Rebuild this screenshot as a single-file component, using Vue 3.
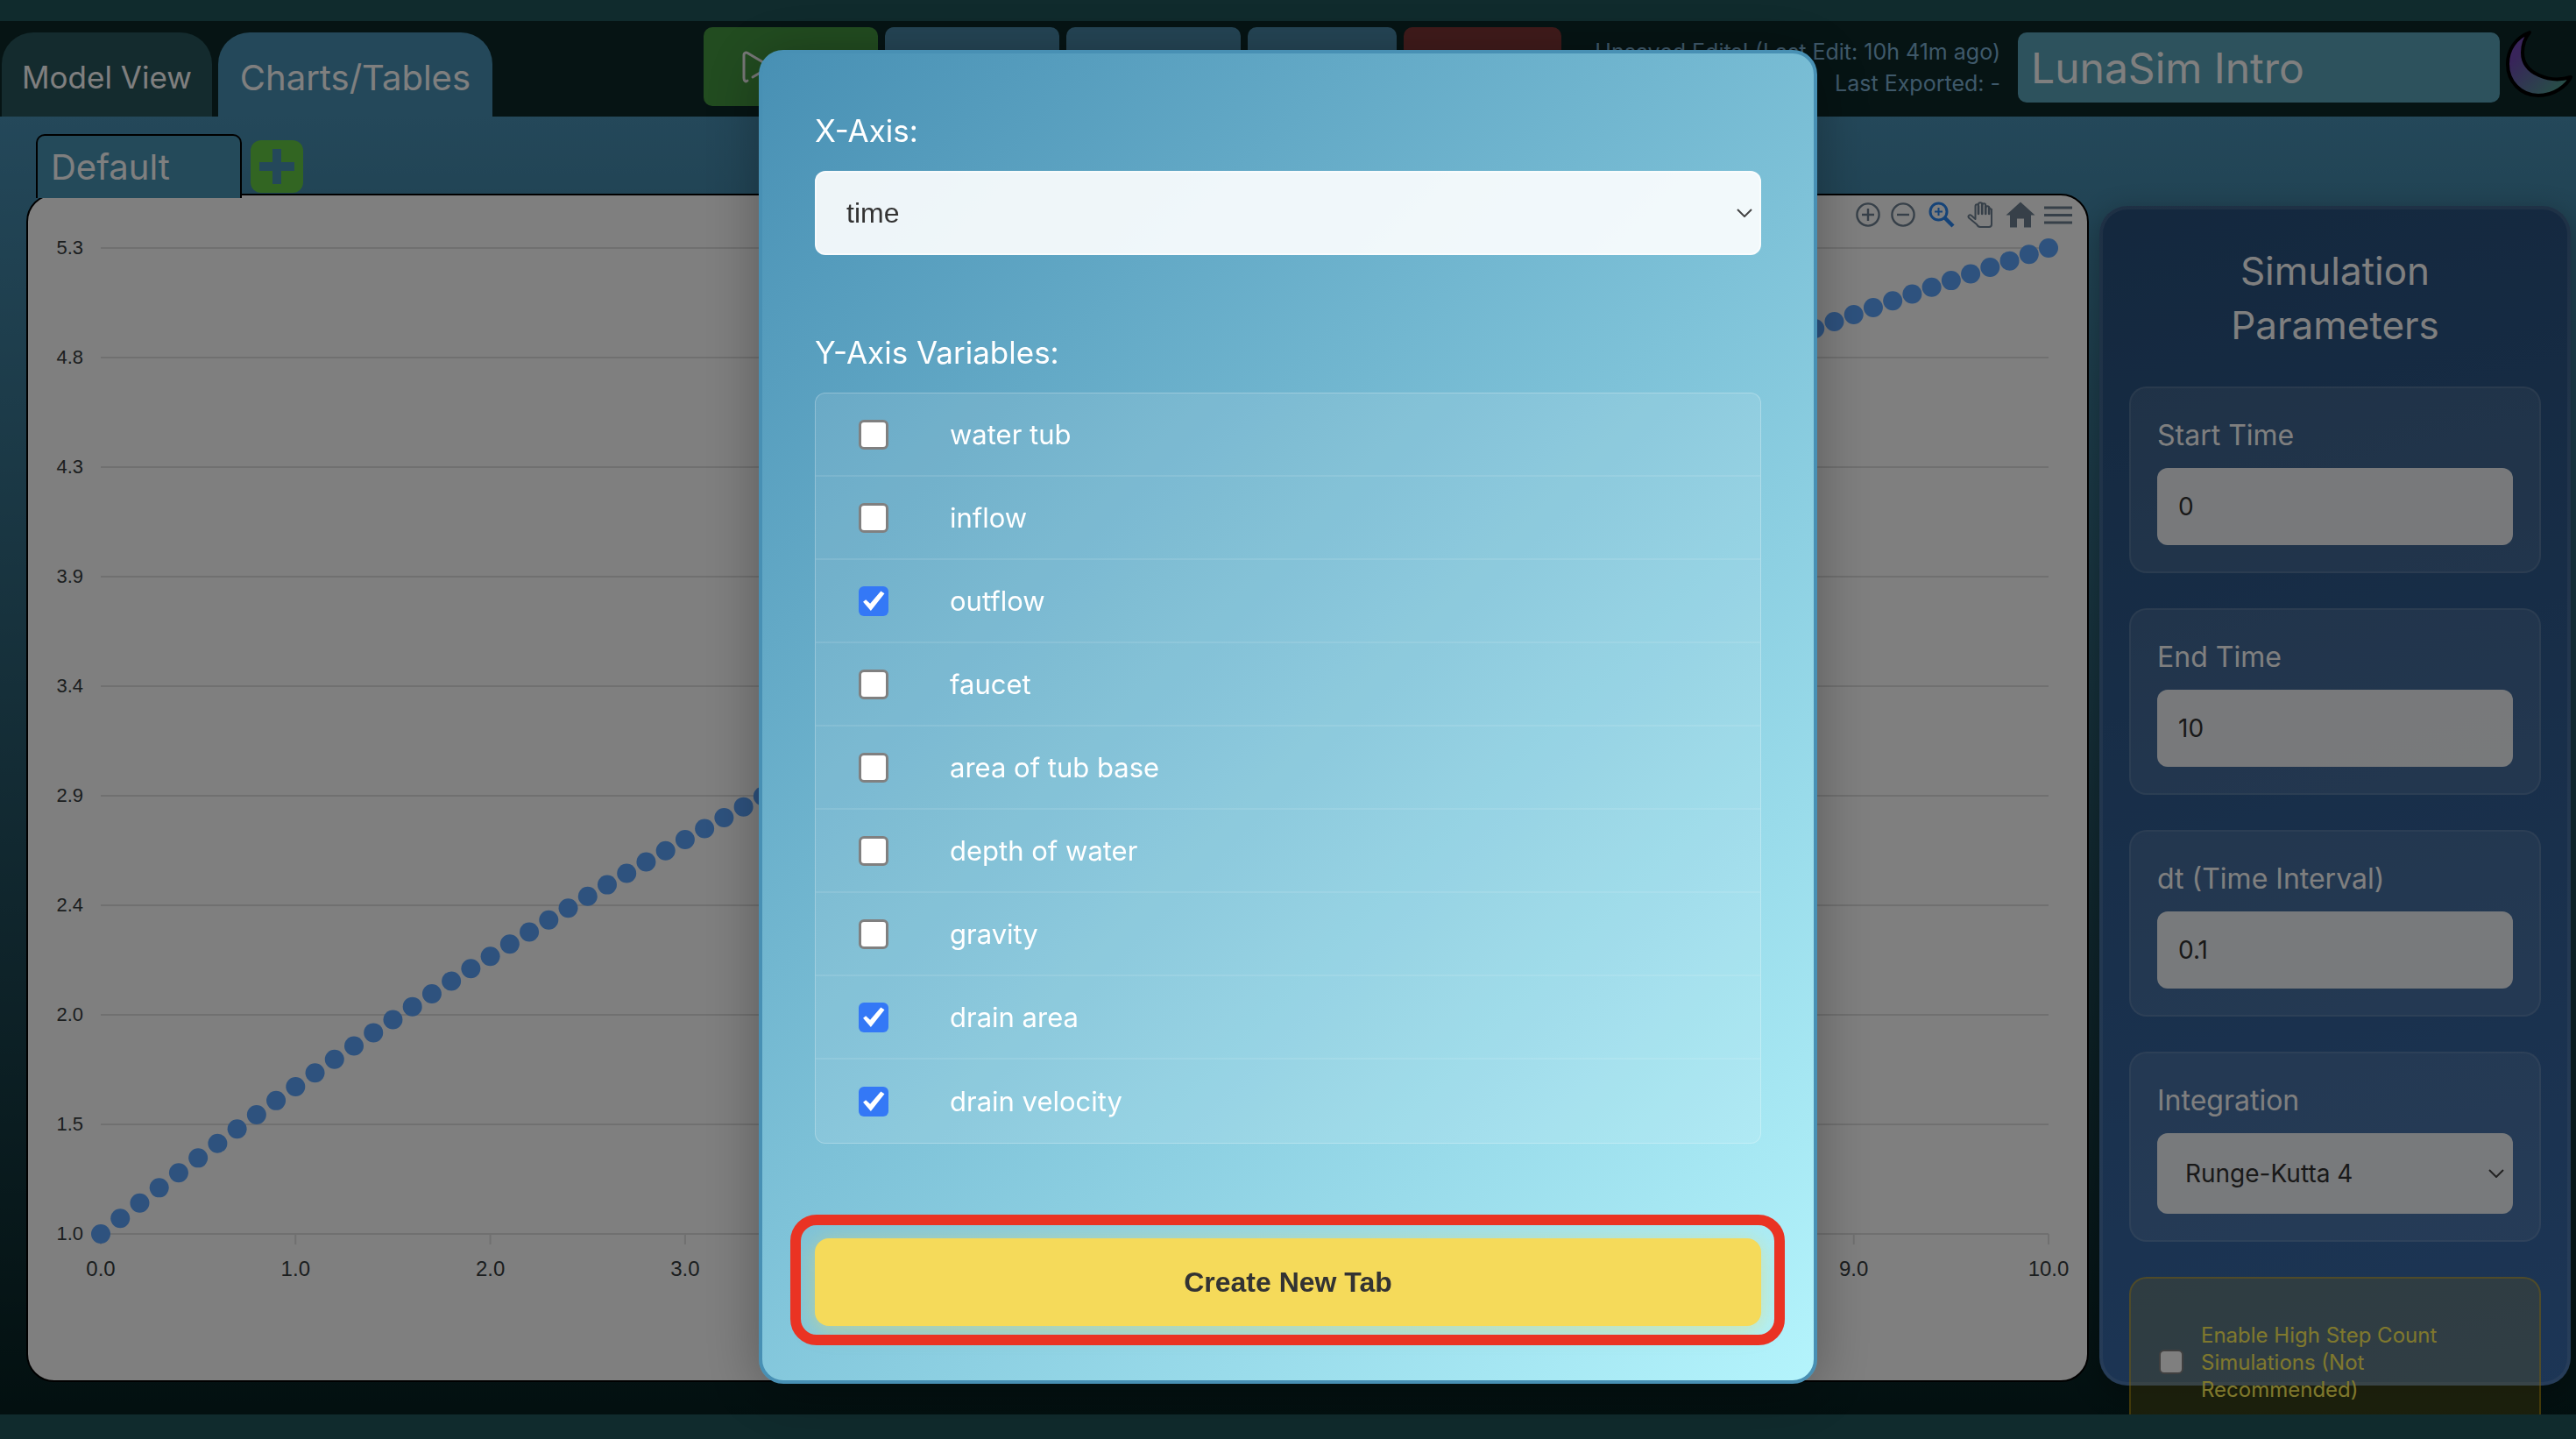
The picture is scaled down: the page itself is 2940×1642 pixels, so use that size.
<script setup>
import { ref } from 'vue'

const xAxis = ref('time')
const variables = ref([
  { name: 'water tub', checked: false },
  { name: 'inflow', checked: false },
  { name: 'outflow', checked: true },
  { name: 'faucet', checked: false },
  { name: 'area of tub base', checked: false },
  { name: 'depth of water', checked: false },
  { name: 'gravity', checked: false },
  { name: 'drain area', checked: true },
  { name: 'drain velocity', checked: true },
])

const fields = [
  { id: 'start', label: 'Start Time', value: '0' },
  { id: 'end', label: 'End Time', value: '10' },
  { id: 'dt', label: 'dt (Time Interval)', value: '0.1' },
]

const plot = { left: 83, right: 2306, top: 60, bottom: 1185 }
const yLabels = ['5.3', '4.8', '4.3', '3.9', '3.4', '2.9', '2.4', '2.0', '1.5', '1.0']
const yTicks = yLabels.map((label, i) => ({ label, y: plot.top + i * 125 }))
const xTicks = [0, 1, 2, 3, 9, 10].map((value) => ({
  label: value.toFixed(1),
  x: plot.left + (value * (plot.right - plot.left)) / 10,
}))
const points = Array.from({ length: 101 }, (_, i) => {
  const t = i / 10
  const rise = 178.92 * t - 11.632 * t ** 2 + 0.7347 * t ** 3 - 0.02357 * t ** 4
  return { x: plot.left + (t * (plot.right - plot.left)) / 10, y: plot.bottom - rise }
})
</script>

<template>
  <div class="page">
    <header class="header">
      <nav class="views">
        <button class="view">Model View</button>
        <button class="view active">Charts/Tables</button>
      </nav>
      <div class="toolbar">
        <button class="tool run" aria-label="Run">
          <svg width="44" height="40" viewBox="0 0 44 40" fill="none" stroke="#f0f0f0" stroke-width="3" stroke-linecap="round" stroke-linejoin="round">
            <path d="M7 36 C5 38 3 36 3 33 V7 C3 4 6 3 8 5 L30 18 C32 19 32 21 30 22 L13 32" />
          </svg>
        </button>
        <button class="tool" aria-label="New"></button>
        <button class="tool" aria-label="Load"></button>
        <button class="tool narrow" aria-label="Export"></button>
        <button class="tool danger" aria-label="Clear"></button>
      </div>
      <p class="status">Unsaved Edits! (Last Edit: 10h 41m ago)<br />Last Exported: -</p>
      <input class="model-name" aria-label="Model name" value="LunaSim Intro" />
      <button class="moon" aria-label="Theme">
        <svg width="78" height="84" viewBox="0 0 78 84">
          <defs>
            <linearGradient id="moon" x1="0" y1="0" x2="1" y2="1">
              <stop offset="0.25" stop-color="#7048b4" />
              <stop offset="0.85" stop-color="#509c90" />
            </linearGradient>
          </defs>
          <path d="M28 6 C12 12 3 26 3 42 C3 62 18 78 38 78 C56 78 70 67 75 57 C52 64 20 54 20 29 C20 19 23 12 28 6 Z" fill="url(#moon)" stroke="#000" stroke-width="4" stroke-linejoin="round" />
        </svg>
      </button>
    </header>

    <main class="main">
      <section class="charts">
        <div class="tab-row">
          <button class="tab">Default</button>
          <button class="add" aria-label="Add tab">
            <svg width="40" height="40" viewBox="0 0 40 40" fill="none" stroke="#4890b4" stroke-width="10">
              <path d="M20 0V40M0 20H40" />
            </svg>
          </button>
        </div>
        <div class="chart-card">
          <svg class="chart" viewBox="0 0 2350 1352">
            <g stroke="#e0e0e0" stroke-width="2">
              <line v-for="t in yTicks" :key="t.label" :x1="plot.left" :x2="plot.right" :y1="t.y" :y2="t.y" />
              <line v-for="t in xTicks" :key="t.label" :x1="t.x" :x2="t.x" :y1="plot.bottom" :y2="plot.bottom + 12" />
            </g>
            <g class="y-label">
              <text v-for="t in yTicks" :key="t.label" x="63" :y="t.y + 7">{{ t.label }}</text>
            </g>
            <g class="x-label">
              <text v-for="t in xTicks" :key="t.label" :x="t.x" y="1233">{{ t.label }}</text>
            </g>
            <g fill="#5ca4fc">
              <circle v-for="p in points" :key="p.x" :cx="p.x" :cy="p.y" r="11" />
            </g>
          </svg>
          <div class="chart-tools">
            <button aria-label="Zoom in">
              <svg width="30" height="30" viewBox="0 0 30 30" fill="none" stroke="#6e8192" stroke-width="2.4"><circle cx="15" cy="15" r="12.6" /><path d="M15 8v14M8 15h14" /></svg>
            </button>
            <button aria-label="Zoom out">
              <svg width="30" height="30" viewBox="0 0 30 30" fill="none" stroke="#6e8192" stroke-width="2.4"><circle cx="15" cy="15" r="12.6" /><path d="M8 15h14" /></svg>
            </button>
            <button class="wide" aria-label="Selection zoom">
              <svg width="30" height="30" viewBox="0 0 30 30" fill="none" stroke="#2a86f0"><circle cx="11.5" cy="11.5" r="9.5" stroke-width="3" /><path d="M11.5 7v9M7 11.5h9" stroke-width="2" /><path d="M18.5 18.5 28 28" stroke-width="4.4" /></svg>
            </button>
            <button aria-label="Panning">
              <svg width="30" height="30" viewBox="0 0 30 30" fill="none" stroke="#6e8192" stroke-width="2" stroke-linejoin="round" stroke-linecap="round"><path d="M9.500 17V5.500c0-3 3.500-3 3.500 0V3.500c0-3 4.200-3 4.200 0v1c0-3 4-3 4 0v3c0-3 4-3 4 0L28 9v17c0 2-1 3-3 3H15c-2 0-3-1-4-3L2 18.500c-1.500-2.500 1-4 3-2.500l4.500 4V15" /><path d="M13 5v9M17.200 4v10M21.200 5v9M25.200 7v7" stroke-width="2.600" /></svg>
            </button>
            <button class="wider" aria-label="Reset zoom">
              <svg width="34" height="30" viewBox="0 0 34 30" fill="#6e8192"><path d="M17 .5 33.500 15.500H29V29.500H21V19.500H13V29.500H5V15.500H.5z" /></svg>
            </button>
            <button class="menu" aria-label="Menu">
              <svg width="32" height="30" viewBox="0 0 32 30" stroke="#6e8192" stroke-width="3.200"><path d="M0 7H32M0 15.500H32M0 24H32" /></svg>
            </button>
          </div>
        </div>
      </section>

      <aside class="params">
        <h2>Simulation Parameters</h2>
        <div v-for="f in fields" :key="f.id" class="field">
          <label :for="f.id">{{ f.label }}</label>
          <input :id="f.id" type="text" :value="f.value" />
        </div>
        <div class="field">
          <label for="integration">Integration</label>
          <div class="select-wrap">
            <select id="integration"><option>Runge-Kutta 4</option></select>
            <svg class="chevron" width="18" height="10" viewBox="0 0 18 10" fill="none" stroke="#444" stroke-width="2"><path d="M1 1 9 9 17 1" /></svg>
          </div>
        </div>
        <label class="warning">
          <input type="checkbox" class="check small" />
          <span>Enable High Step Count Simulations (Not Recommended)</span>
        </label>
      </aside>
    </main>

    <div class="backdrop">
      <form class="dialog" @submit.prevent>
        <label class="caption" for="x-axis">X-Axis:</label>
        <div class="select-wrap">
          <select id="x-axis" v-model="xAxis"><option>time</option></select>
          <svg class="chevron" width="18" height="10" viewBox="0 0 18 10" fill="none" stroke="#444" stroke-width="2"><path d="M1 1 9 9 17 1" /></svg>
        </div>
        <fieldset>
          <legend class="caption">Y-Axis Variables:</legend>
          <div class="list">
            <label v-for="v in variables" :key="v.name" class="row">
              <input v-model="v.checked" type="checkbox" class="check" />
              <span>{{ v.name }}</span>
            </label>
          </div>
        </fieldset>
        <div class="submit-wrap">
          <button class="submit">Create New Tab</button>
          <div class="highlight"></div>
        </div>
      </form>
    </div>
  </div>
</template>

<style>
body {
  margin: 0;
  background: #20565a;
}
</style>

<style scoped>
* {
  box-sizing: border-box;
}
.page {
  height: 100vh;
  padding: 24px 0 28px;
  display: flex;
  flex-direction: column;
  overflow: hidden;
  background: #20565a;
  font-family: Inter, "Liberation Sans", sans-serif;
  color: #fff;
}
button,
input,
select {
  font: inherit;
  color: inherit;
  border: 0;
  margin: 0;
  padding: 0;
  background: none;
}
svg {
  display: block;
}
.header {
  flex: none;
  height: 109px;
  display: flex;
  align-items: flex-start;
  background: #0c2828;
  padding: 0 0 0 2px;
}
.views {
  display: flex;
  align-self: flex-end;
  gap: 7px;
}
.view {
  height: 96px;
  padding: 6px 23px 0;
  border-radius: 36px 36px 0 0;
  background: #28565c;
  font-size: 35px;
  white-space: nowrap;
}
.view.active {
  padding: 6px 25px 0;
  background: #4890b4;
  font-size: 40px;
}
.toolbar {
  display: flex;
  gap: 8px;
  margin: 7px 0 0 241px;
}
.tool {
  width: 199px;
  height: 90px;
  border-radius: 10px;
  background: #4a8aaa;
}
.tool.run {
  background: #449840;
  padding: 0 0 0 43px;
}
.tool.narrow {
  width: 170px;
}
.tool.danger {
  width: 180px;
  background: #803636;
}
.status {
  margin: 17px 20px 0 auto;
  text-align: right;
  font-size: 25px;
  line-height: 36px;
  color: #7fb2d4;
  white-space: nowrap;
}
.model-name {
  width: 550px;
  height: 80px;
  margin-top: 13px;
  padding: 0 15px;
  border-radius: 10px;
  background: #5aa4ba;
  font-size: 48px;
}
.moon {
  margin: 7px 3px 0 6px;
}
.main {
  flex: 1;
  min-height: 0;
  overflow: hidden;
  display: grid;
  grid-template-columns: minmax(0, 1fr) 538px;
  grid-template-rows: minmax(0, 1fr);
  gap: 12px;
  padding: 20px 6px 0 30px;
  background: linear-gradient(180deg, #4890b4, #062020);
}
.charts {
  display: flex;
  flex-direction: column;
  padding-bottom: 37px;
}
.tab-row {
  display: flex;
  align-items: center;
  gap: 10px;
  height: 73px;
  margin: 0 0 -5px 11px;
  position: relative;
  z-index: 1;
}
.tab {
  width: 235px;
  height: 73px;
  padding-left: 15px;
  text-align: left;
  border: 2px solid #000;
  border-bottom: 0;
  border-radius: 10px 10px 0 0;
  background: #4894b4;
  font-size: 40px;
}
.add {
  width: 60px;
  height: 60px;
  border-radius: 12px;
  background: #64ca44;
  display: grid;
  place-items: center;
}
.chart-card {
  flex: 1;
  min-height: 0;
  position: relative;
  border: 2px solid #000;
  border-radius: 32px;
  background: #fff;
}
.chart {
  width: 100%;
  height: 100%;
}
.chart text {
  font-family: "Liberation Sans", Arial, sans-serif;
  fill: #373d3f;
}
.y-label {
  font-size: 22px;
  text-anchor: end;
}
.x-label {
  font-size: 24px;
  text-anchor: middle;
}
.chart-tools {
  position: absolute;
  top: 0;
  right: 16px;
  display: flex;
}
.chart-tools button {
  width: 40px;
  height: 44px;
  display: grid;
  place-items: center;
}
.chart-tools .wide {
  width: 48px;
}
.chart-tools .wider {
  width: 52px;
}
.chart-tools .menu {
  width: 34px;
}
.params {
  margin: 82px 0 33px;
  padding: 39px 30px 0;
  border: 4px solid rgba(255, 255, 255, 0.1);
  border-radius: 32px;
  background: linear-gradient(165deg, #28507c, #3a6cac) border-box;
  box-shadow: 0 8px 32px rgba(0, 0, 0, 0.3);
}
h2 {
  margin: 0 0 39px;
  padding: 0 60px;
  text-align: center;
  font-size: 44px;
  line-height: 62px;
  font-weight: 400;
}
.field {
  margin-bottom: 40px;
  padding: 30px;
  border: 2px solid rgba(255, 255, 255, 0.1);
  border-radius: 20px;
  background: rgba(255, 255, 255, 0.1);
}
.field label {
  display: block;
  margin-bottom: 14px;
  font-size: 32px;
  line-height: 47px;
}
.field input,
.field select {
  width: 100%;
  height: 88px;
  padding: 0 24px;
  border-radius: 12px;
  background: rgba(255, 255, 255, 0.92);
  color: #333;
  font-size: 28px;
}
.select-wrap {
  position: relative;
}
select {
  display: block;
  appearance: none;
}
.field select {
  height: 92px;
  padding: 0 32px;
}
.chevron {
  position: absolute;
  right: 10px;
  top: 50%;
  margin-top: -5px;
  pointer-events: none;
}
.warning {
  display: flex;
  align-items: center;
  gap: 20px;
  height: 194px;
  padding: 0 60px 0 32px;
  border: 2px solid rgba(255, 193, 7, 0.4);
  border-radius: 20px;
  background: rgba(255, 193, 7, 0.2);
  color: #fff05a;
  font-size: 24px;
  line-height: 31px;
}
.check {
  appearance: none;
  flex: none;
  width: 34px;
  height: 34px;
  border: 3px solid #808080;
  border-radius: 6px;
  background: #fff;
  display: grid;
  place-items: center;
}
.check.small {
  width: 28px;
  height: 28px;
  border-width: 2px;
}
.check:checked {
  border: 0;
  background: #3478f6;
}
.check:checked::after {
  content: "";
  width: 26px;
  height: 24px;
  background: #fff;
  clip-path: polygon(4% 55%, 16% 45%, 35% 64%, 82% 4%, 98% 16%, 38% 98%);
}
.backdrop {
  position: fixed;
  inset: 0;
  z-index: 10;
  padding-bottom: 6px;
  display: flex;
  align-items: center;
  justify-content: center;
  background: rgba(0, 0, 0, 0.5);
}
.dialog {
  width: 1208px;
  padding: 60px 60px 62px;
  border: 4px solid #4890b4;
  border-radius: 28px;
  background: linear-gradient(135deg, #4890b4, #b4f4fc);
  box-shadow: 0 8px 64px rgba(0, 0, 0, 0.3);
}
.caption {
  display: block;
  padding: 0;
  margin-bottom: 18px;
  font-size: 35px;
  line-height: 56px;
}
.dialog select {
  width: 100%;
  height: 96px;
  padding: 0 34px;
  border-radius: 12px;
  border: 2px solid rgba(255, 255, 255, 0.5);
  background: rgba(255, 255, 255, 0.9);
  font-family: "Liberation Sans", Arial, sans-serif;
  font-size: 32px;
  color: #333;
}
fieldset {
  margin: 83px 0 108px;
  padding: 0;
  border: 0;
}
.list {
  border: 1px solid rgba(255, 255, 255, 0.25);
  border-radius: 12px;
  background: rgba(255, 255, 255, 0.1);
}
.row {
  display: flex;
  align-items: center;
  gap: 70px;
  height: 95px;
  padding-left: 49px;
  border-bottom: 2px solid rgba(255, 255, 255, 0.1);
  font-size: 31px;
}
.row:last-child {
  border-bottom: 0;
}
.submit-wrap {
  position: relative;
}
.submit {
  display: block;
  width: 100%;
  height: 100px;
  border-radius: 16px;
  background: #f5da5a;
  box-shadow: 0 4px 24px rgba(245, 218, 90, 0.5);
  font-family: "Liberation Sans", Arial, sans-serif;
  font-size: 32px;
  font-weight: 700;
  color: #333;
}
.highlight {
  position: absolute;
  inset: -27px -27px -22px -28px;
  border: 12px solid #ea3323;
  border-radius: 30px;
  pointer-events: none;
}
</style>
